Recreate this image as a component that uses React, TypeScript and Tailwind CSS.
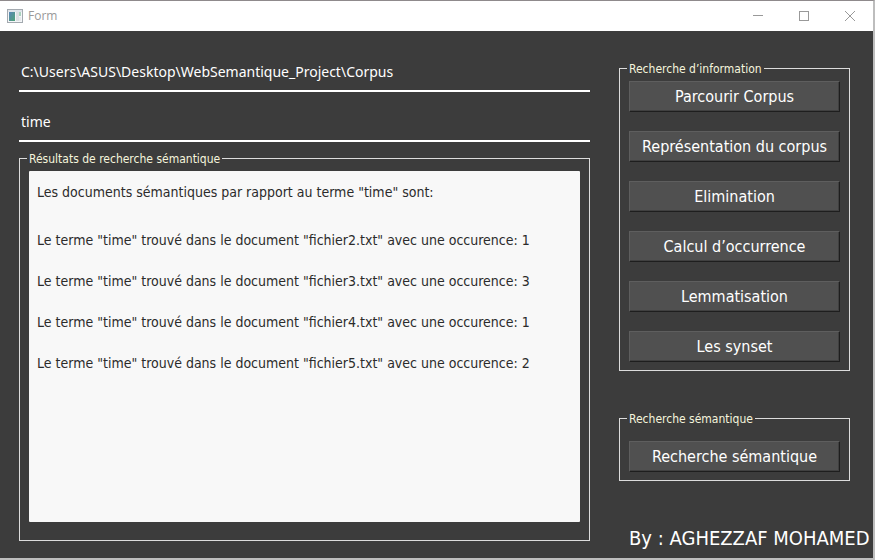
import type { ReactNode } from "react";

const corpusActions = [
  "Parcourir Corpus",
  "Représentation du corpus",
  "Elimination",
  "Calcul d’occurrence",
  "Lemmatisation",
  "Les synset",
];

const results = [
  { file: "fichier2.txt", count: 1 },
  { file: "fichier3.txt", count: 3 },
  { file: "fichier4.txt", count: 1 },
  { file: "fichier5.txt", count: 2 },
];

function TitleBar() {
  return (
    <header className="flex h-[30px] items-center bg-white pl-[7px] text-[#999999]">
      <svg width="16" height="14" viewBox="0 0 16 14" shapeRendering="crispEdges" aria-hidden="true">
        <defs>
          <linearGradient id="pane" x1="0" y1="0" x2="1" y2="1">
            <stop offset="0" stopColor="#5a86b8" />
            <stop offset="1" stopColor="#4fa276" />
          </linearGradient>
        </defs>
        <rect x="0.5" y="0.5" width="15" height="13" fill="#f4f6f8" stroke="#a3a9af" />
        <rect x="1" y="1" width="14" height="2" fill="#dfe4ea" />
        <rect x="2" y="3" width="6" height="9" fill="url(#pane)" />
        <rect x="9" y="3" width="3" height="9" fill="#dcdfe2" />
        <rect x="12" y="3" width="2" height="4" fill="#a9d3bd" />
        <rect x="12" y="8" width="2" height="4" fill="#e6e9ec" />
      </svg>
      <h1 className="ml-[5px] flex-1 font-['Open_Sans',sans-serif] text-[12px] leading-4">Form</h1>
      <button type="button" aria-label="Minimize" className="flex h-full w-[46px] items-center justify-center">
        <svg width="10" height="10" viewBox="0 0 10 10" shapeRendering="crispEdges">
          <path d="M0 4.5H10" stroke="currentColor" />
        </svg>
      </button>
      <button type="button" aria-label="Maximize" className="flex h-full w-[46px] items-center justify-center">
        <svg width="10" height="10" viewBox="0 0 10 10" shapeRendering="crispEdges">
          <rect x="0.5" y="0.5" width="9" height="9" fill="none" stroke="currentColor" />
        </svg>
      </button>
      <button type="button" aria-label="Close" className="flex h-full w-[46px] items-center justify-center">
        <svg width="10" height="10" viewBox="0 0 10 10">
          <path d="M0 0L10 10M10 0L0 10" stroke="currentColor" />
        </svg>
      </button>
    </header>
  );
}

function LineInput({ label, value }: { label: string; value: string }) {
  return (
    <input
      type="text"
      aria-label={label}
      defaultValue={value}
      className="h-10 w-full border-b-2 border-white bg-transparent px-[2px] font-['Noto_Sans',sans-serif] text-[14px] text-white outline-none"
    />
  );
}

function Group({ title, className, children }: { title: string; className: string; children: ReactNode }) {
  return (
    <fieldset className={`border border-[#dcdcdc] px-[9px] ${className}`}>
      <legend className="-ml-[2px] px-[2px] pt-px text-[12px] leading-4 text-[#f5f5dc]">{title}</legend>
      {children}
    </fieldset>
  );
}

function PushButton({ children }: { children: ReactNode }) {
  return (
    <button
      type="button"
      className="h-[31px] w-full border border-t-[#5e5e5e] border-r-[#1e1e1e] border-b-[#1e1e1e] border-l-[#5e5e5e] bg-[#505050] pt-px text-[16px] leading-5 text-white shadow-[inset_-1px_-1px_0_#404040]"
    >
      {children}
    </button>
  );
}

export default function App() {
  return (
    <div className="flex min-h-screen flex-col border-t border-r-2 border-b-2 border-t-[#8f8a8c] border-r-[#bdbdbd] border-b-[#bdbdbd] bg-[#3c3c3c] font-['DejaVu_Sans_Condensed','DejaVu_Sans',sans-serif]">
      <TitleBar />
      <main className="flex flex-1 pr-1 pl-[19px]">
        <section className="flex flex-1 flex-col pt-[21px] pb-[17px]">
          <LineInput label="Dossier du corpus" value="C:\Users\ASUS\Desktop\WebSemantique_Project\Corpus" />
          <div className="mt-[10px] mb-2 flex">
            <LineInput label="Terme" value="time" />
          </div>
          <Group title="Résultats de recherche sémantique" className="flex flex-1 flex-col pt-1 pb-[18px]">
            <div className="h-full rounded-[1px] bg-[#f8f8f8] px-2 py-3 text-[14px] leading-[18px] text-[#2b2b2b]">
              <p>Les documents sémantiques par rapport au terme "time" sont:</p>
              <ul className="mt-[30px] flex flex-col gap-[23px]">
                {results.map((r) => (
                  <li key={r.file}>
                    Le terme "time" trouvé dans le document "{r.file}" avec une occurence: {r.count}
                  </li>
                ))}
              </ul>
            </div>
          </Group>
        </section>
        <aside className="ml-[29px] flex w-[250px] flex-col pt-[29px] pb-1">
          <div className="mr-[19px] flex flex-col gap-[39px]">
            <Group title="Recherche d’information" className="pt-1 pb-2">
              <div className="flex flex-col gap-[19px]">
                {corpusActions.map((a) => (
                  <PushButton key={a}>{a}</PushButton>
                ))}
              </div>
            </Group>
            <Group title="Recherche sémantique" className="pt-[14px] pb-2">
              <PushButton>Recherche sémantique</PushButton>
            </Group>
          </div>
          <p className="mt-auto pl-[10px] text-[20px] leading-8 whitespace-nowrap text-white">By : AGHEZZAF MOHAMED</p>
        </aside>
      </main>
    </div>
  );
}
